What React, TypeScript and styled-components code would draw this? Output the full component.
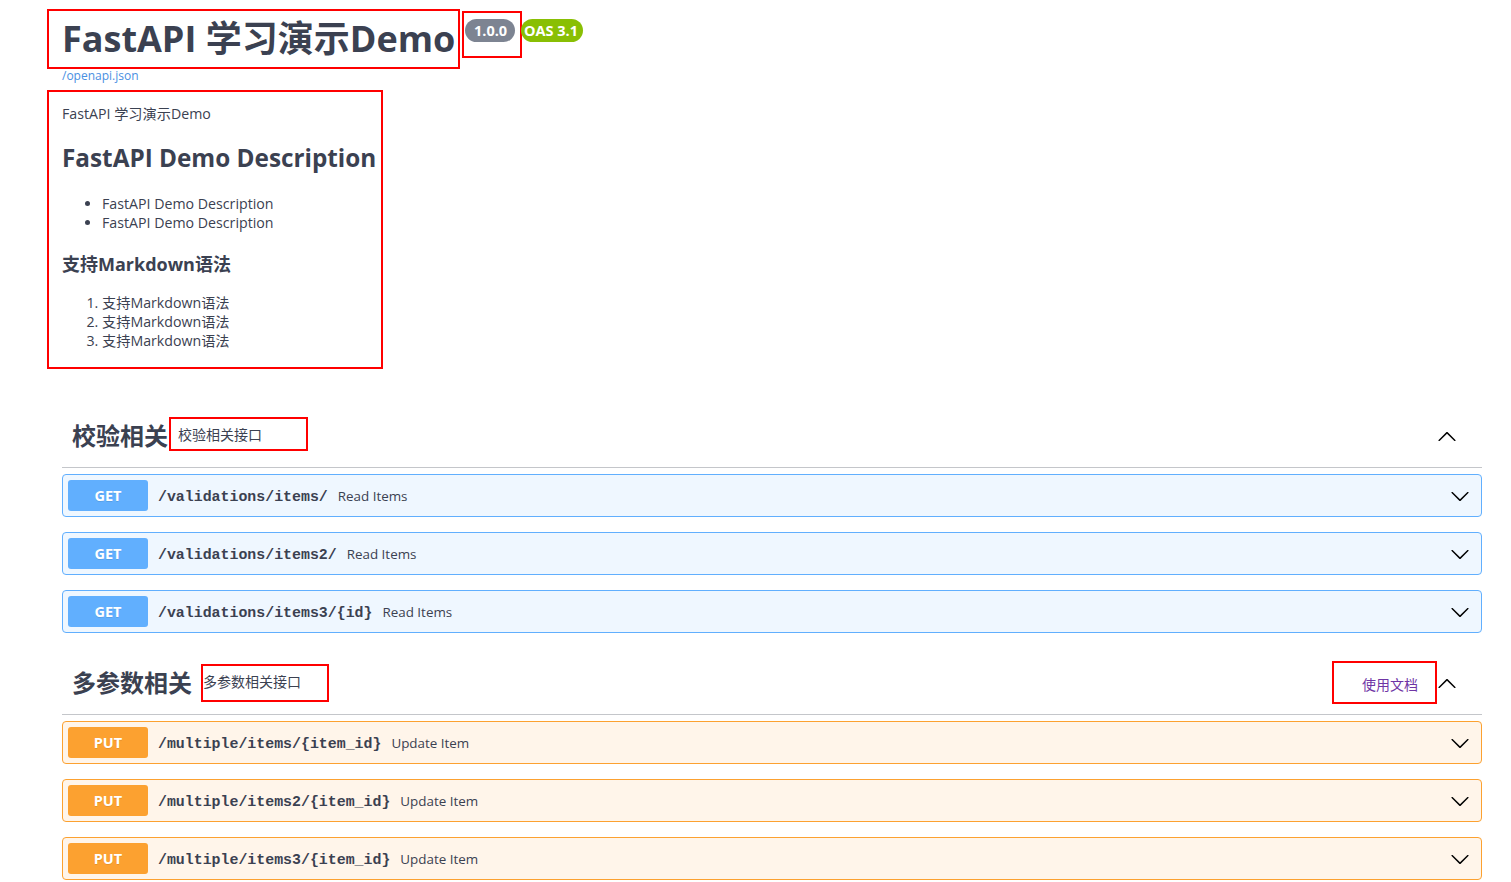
import React from "react";
import styled, { createGlobalStyle } from "styled-components";

const GlobalStyle = createGlobalStyle`
  html, body { margin: 0; padding: 0; background: #ffffff; }
  body {
    font-family: "Open Sans", "Noto Sans CJK SC", sans-serif;
    color: #3b4151;
  }
  * { box-sizing: border-box; }
`;

const RED = "#ff0000";

const Page = styled.div`
  padding: 9px 29px 0 47px;
`;

const InfoHeader = styled.div`
  display: flex;
  align-items: flex-start;
`;

const TitleBox = styled.div`
  width: 413px;
  height: 60px;
  border: 2px solid ${RED};
  padding-left: 13px;
`;

const Title = styled.h2`
  margin: 0;
  font-size: 36px;
  line-height: 56px;
  font-weight: 700;
  white-space: nowrap;
  color: #3b4151;
`;

const BadgeBox = styled.div`
  width: 60px;
  height: 47px;
  margin: 2px 0 0 2px;
  border: 2px solid ${RED};
  padding: 6px 0 0 1px;
`;

const Pill = styled.span<{ $bg: string; $pad: string }>`
  display: inline-block;
  background: ${(p) => p.$bg};
  color: #ffffff;
  font-size: 14.5px;
  font-weight: 700;
  line-height: 19px;
  padding: ${(p) => p.$pad};
  border-radius: 57px;
  white-space: nowrap;
`;

const OasPill = styled(Pill)`
  margin: 10px 0 0 -1px;
`;

const SpecLink = styled.a`
  display: block;
  margin-left: 15px;
  font-size: 12px;
  line-height: 14px;
  color: #4990e2;
  text-decoration: none;
`;

const DescBox = styled.div`
  width: 336px;
  margin-top: 7px;
  border: 2px solid ${RED};
  padding: 12px 6px 17px 13px;
  font-size: 14.2px;
  color: #3b4151;
`;

const Para = styled.p`
  margin: 0;
  line-height: 19px;
`;

const H1 = styled.h1`
  margin: 19px 0 0;
  font-size: 24.3px;
  line-height: 32px;
  font-weight: 700;
  white-space: nowrap;
`;

const H3 = styled.h3`
  margin: 20px 0 0;
  font-size: 18px;
  line-height: 24px;
  font-weight: 700;
`;

const BulletList = styled.ul<{ $mt: number }>`
  margin: ${(p) => p.$mt}px 0 0;
  padding-left: 40px;
  line-height: 19px;
`;

const NumberList = styled.ol<{ $mt: number }>`
  margin: ${(p) => p.$mt}px 0 0;
  padding-left: 40px;
  line-height: 19px;
`;

const Sections = styled.div`
  margin: 36px 0 0 15px;
`;

const Section = styled.section`
  & + & {
    margin-top: 18px;
  }
`;

const TagHeader = styled.div`
  display: flex;
  align-items: center;
  min-height: 63px;
  padding: 10px 25px 10px 10px;
  border-bottom: 1px solid rgba(59, 65, 81, 0.3);
`;

const TagName = styled.span`
  font-size: 24px;
  line-height: 30px;
  font-weight: 700;
  color: #3b4151;
  white-space: nowrap;
`;

const TagDesc = styled.small<{ $pad: string; $ml: number; $mb: number }>`
  display: block;
  border: 2px solid ${RED};
  padding: ${(p) => p.$pad};
  margin: 0 0 ${(p) => p.$mb}px ${(p) => p.$ml}px;
  font-size: 14px;
  line-height: 20px;
  font-weight: 400;
  color: #3b4151;
  white-space: nowrap;
`;

const Spacer = styled.div`
  flex: 1;
`;

const DocsBox = styled.div`
  border: 2px solid ${RED};
  padding: 12px 17px 7px 28px;
  font-size: 14px;
  line-height: 20px;
`;

const DocsLink = styled.a`
  color: #6f35a5;
  text-decoration: none;
`;

const ArrowButton = styled.span<{ $mr: number }>`
  display: flex;
  width: 20px;
  height: 20px;
  margin-right: ${(p) => p.$mr}px;
  flex: none;
  svg {
    fill: #000000;
  }
`;

const OpList = styled.div`
  display: flex;
  flex-direction: column;
  gap: 15px;
  margin-top: 6px;
`;

const OpRow = styled.div<{ $color: string; $bg: string }>`
  display: flex;
  align-items: center;
  height: 43px;
  padding: 5px;
  border: 1px solid ${(p) => p.$color};
  border-radius: 4px;
  background: ${(p) => p.$bg};
`;

const MethodBadge = styled.span<{ $color: string }>`
  flex: none;
  width: 80px;
  height: 31px;
  border-radius: 3px;
  background: ${(p) => p.$color};
  color: #ffffff;
  font-size: 14.5px;
  font-weight: 700;
  line-height: 31px;
  text-align: center;
  text-shadow: 0 1px 0 rgba(0, 0, 0, 0.1);
`;

const OpPath = styled.span`
  padding: 2px 10px 0;
  font-family: "Liberation Mono", "Noto Sans CJK SC", monospace;
  font-size: 14.9px;
  font-weight: 700;
  color: #3b4151;
  white-space: nowrap;
`;

const OpSummary = styled.span`
  flex: 1;
  font-size: 13.4px;
  color: #3b4151;
  white-space: nowrap;
`;

const DOWN =
  "M17.418 6.109c.272-.268.709-.268.979 0s.271.701 0 .969l-7.908 7.83c-.27.268-.707.268-.979 0l-7.908-7.830c-.27-.268-.27-.701 0-.969.271-.268.709-.268.979 0L10 13.25l7.418-7.141z";
const UP =
  "M17.418 14.908c.272.268.709.268.979 0s.271-.701 0-.969l-7.908-7.830c-.27-.268-.707-.268-.979 0l-7.908 7.830c-.27.268-.27.701 0 .969.271.268.709.268.979 0L10 7.767l7.418 7.141z";

const Arrow = ({ d }: { d: string }) => (
  <svg width="20" height="20" viewBox="0 0 20 20" aria-hidden="true">
    <path d={d} />
  </svg>
);

type Op = { path: string; summary: string };
type Tag = {
  name: string;
  desc: string;
  descPad: string;
  descMl: number;
  descMb: number;
  docs?: string;
  method: string;
  color: string;
  bg: string;
  ops: Op[];
};

const tags: Tag[] = [
  {
    name: "校验相关",
    desc: "校验相关接口",
    descPad: "6px 44px 4px 7px",
    descMl: 1,
    descMb: 5,
    method: "GET",
    color: "#61affe",
    bg: "rgba(97, 175, 254, 0.1)",
    ops: [
      { path: "/validations/items/", summary: "Read Items" },
      { path: "/validations/items2/", summary: "Read Items" },
      { path: "/validations/items3/{id}", summary: "Read Items" },
    ],
  },
  {
    name: "多参数相关",
    desc: "多参数相关接口",
    descPad: "6px 26px 8px 0",
    descMl: 9,
    descMb: 0,
    docs: "使用文档",
    method: "PUT",
    color: "#fca130",
    bg: "rgba(252, 161, 48, 0.1)",
    ops: [
      { path: "/multiple/items/{item_id}", summary: "Update Item" },
      { path: "/multiple/items2/{item_id}", summary: "Update Item" },
      { path: "/multiple/items3/{item_id}", summary: "Update Item" },
    ],
  },
];

export default function App() {
  return (
    <>
      <GlobalStyle />
      <Page>
        <InfoHeader>
          <TitleBox>
            <Title>FastAPI 学习演示Demo</Title>
          </TitleBox>
          <BadgeBox>
            <Pill $bg="#7d8492" $pad="2px 8px 2px 9px">
              1.0.0
            </Pill>
          </BadgeBox>
          <OasPill $bg="#89bf04" $pad="2px 5px 2px 3px">
            OAS 3.1
          </OasPill>
        </InfoHeader>
        <SpecLink href="#">/openapi.json</SpecLink>
        <DescBox>
          <Para>FastAPI 学习演示Demo</Para>
          <H1>FastAPI Demo Description</H1>
          <BulletList $mt={20}>
            <li>FastAPI Demo Description</li>
            <li>FastAPI Demo Description</li>
          </BulletList>
          <H3>支持Markdown语法</H3>
          <NumberList $mt={17}>
            <li>支持Markdown语法</li>
            <li>支持Markdown语法</li>
            <li>支持Markdown语法</li>
          </NumberList>
        </DescBox>

        <Sections>
          {tags.map((tag) => (
            <Section key={tag.name}>
              <TagHeader>
                <TagName>{tag.name}</TagName>
                <TagDesc $pad={tag.descPad} $ml={tag.descMl} $mb={tag.descMb}>
                  {tag.desc}
                </TagDesc>
                <Spacer />
                {tag.docs && (
                  <DocsBox>
                    <DocsLink href="#">{tag.docs}</DocsLink>
                  </DocsBox>
                )}
                <ArrowButton $mr={0}>
                  <Arrow d={UP} />
                </ArrowButton>
              </TagHeader>
              <OpList>
                {tag.ops.map((op) => (
                  <OpRow key={op.path} $color={tag.color} $bg={tag.bg}>
                    <MethodBadge $color={tag.color}>{tag.method}</MethodBadge>
                    <OpPath>{op.path}</OpPath>
                    <OpSummary>{op.summary}</OpSummary>
                    <ArrowButton $mr={6}>
                      <Arrow d={DOWN} />
                    </ArrowButton>
                  </OpRow>
                ))}
              </OpList>
            </Section>
          ))}
        </Sections>
      </Page>
    </>
  );
}
